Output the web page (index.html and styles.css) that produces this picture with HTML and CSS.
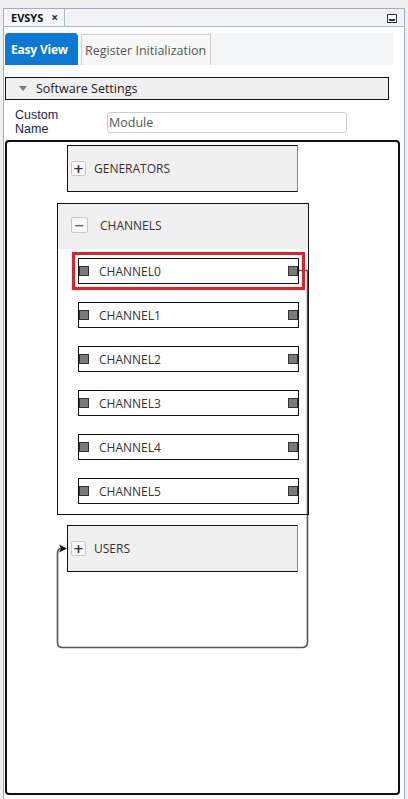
FILE: index.html
```html
<!DOCTYPE html>
<html>
<head>
<meta charset="utf-8">
<link rel="stylesheet" href="styles.css">
</head>
<body>
<div class="panel">
  <div class="titlebar">
    <div class="doc-tab"><span class="doc-name">EVSYS</span><span class="doc-close">×</span></div>
    <div class="min-btn"><span class="min-bar"></span></div>
  </div>
  <div class="tabstrip">
    <div class="tab active">Easy View</div>
    <div class="tab">Register Initialization</div>
  </div>
  <div class="section-head"><span class="tri"></span><span>Software Settings</span></div>
  <div class="field-row">
    <label class="field-label">Custom<br>Name</label>
    <div class="field-input">Module</div>
  </div>
  <div class="canvas">
    <svg class="wires" width="393" height="651" viewBox="0 0 393 651">
      <path d="M291 128.5 H300.5 V500 Q300.5 505.5 295 505.5 H55.5 Q50.5 505.5 50.5 500.5 V411 Q50.5 406.5 55 406.5 H56" fill="none" stroke="#555" stroke-width="1.6"/>
      <polygon points="52,402.5 60,406.5 52,410.5 54,406.5" fill="#111"/>
    </svg>
    <div class="node collapsed gen">
      <span class="pm">+</span><span class="node-title">GENERATORS</span>
    </div>
    <div class="group">
      <div class="group-head"><span class="pm minus">−</span><span class="node-title">CHANNELS</span></div>
      <div class="channels">
        <div class="chan selected"><span class="port"></span><span class="chan-name">CHANNEL0</span><span class="port"></span></div>
        <div class="chan"><span class="port"></span><span class="chan-name">CHANNEL1</span><span class="port"></span></div>
        <div class="chan"><span class="port"></span><span class="chan-name">CHANNEL2</span><span class="port"></span></div>
        <div class="chan"><span class="port"></span><span class="chan-name">CHANNEL3</span><span class="port"></span></div>
        <div class="chan"><span class="port"></span><span class="chan-name">CHANNEL4</span><span class="port"></span></div>
        <div class="chan"><span class="port"></span><span class="chan-name">CHANNEL5</span><span class="port"></span></div>
      </div>
    </div>
    <div class="node collapsed users">
      <span class="pm">+</span><span class="node-title">USERS</span>
    </div>
  </div>
</div>
</body>
</html>
```
FILE: styles.css
```css
* { box-sizing: border-box; }
html, body { margin: 0; padding: 0; }
body {
  background: #f0f0f0;
  width: 408px;
  height: 799px;
  overflow: hidden;
  font-family: "Open Sans", "Noto Sans", sans-serif;
  color: #222;
}
.panel {
  margin: 8px 0 0 3px;
  width: 402px;
  height: 791px;
  background: #fff;
  border: 1px solid #9cb0c5;
  border-bottom: none;
}
.titlebar {
  height: 18px;
  background: #f3f3f3;
  border-bottom: 1px solid #a9b9ca;
  display: flex;
  align-items: stretch;
  justify-content: space-between;
}
.doc-tab {
  width: 61px;
  background: #f6f8fb;
  border-right: 1px solid #a9b9ca;
  display: flex;
  align-items: center;
  padding-left: 7px;
  gap: 8px;
}
.doc-name { font-weight: 700; font-size: 11px; color: #111; }
.doc-close { font-size: 12px; font-weight: 700; color: #333; line-height: 1; }
.min-btn {
  width: 10px;
  height: 9px;
  margin: 5px 7px 0 0;
  border: 1px solid #333;
  background: #fafafa;
  position: relative;
}
.min-bar {
  position: absolute;
  left: 1px; right: 1px; bottom: 1px;
  height: 2px;
  background: #333;
}
.tabstrip {
  margin: 6px 0 0 1px;
  width: 389px;
  height: 32px;
  background: #f5f6f8;
  display: flex;
  align-items: flex-end;
  gap: 3px;
}
.tab {
  height: 31px;
  display: flex;
  align-items: center;
  white-space: nowrap;
  font-size: 12.5px;
  color: #555;
  padding: 0 4px 0 3px;
  background: #f7f7f7;
  border: 1px solid #cfcfcf;
  border-bottom: none;
}
.tab.active {
  height: 32px;
  background: #0a78d4;
  border: none;
  border-radius: 4px 4px 0 0;
  color: #fff;
  font-weight: 700;
  font-size: 12px;
  padding: 0 0 0 6px;
  width: 73px;
  letter-spacing: -0.2px;
}
.section-head {
  margin: 12px 0 0 1px;
  width: 384px;
  height: 23px;
  border: 1px solid #111;
  background: #f0f0f0;
  display: flex;
  align-items: center;
  font-size: 12.5px;
  color: #222;
  padding-left: 13px;
  gap: 9px;
}
.tri {
  width: 0; height: 0;
  border-left: 4px solid transparent;
  border-right: 4px solid transparent;
  border-top: 5px solid #777;
}
.field-row {
  height: 40px;
  display: flex;
  align-items: center;
  padding: 4px 0 0 11px;
}
.field-label {
  width: 92px;
  font-family: "Liberation Sans", Arial, sans-serif;
  font-size: 12.5px;
  line-height: 14.5px;
  color: #1d1d4e;
}
.field-input {
  width: 240px;
  height: 21px;
  border: 1px solid #cdcdcd;
  border-radius: 3px;
  font-size: 12.5px;
  color: #555;
  padding-left: 1px;
  line-height: 19px;
}
.canvas {
  position: relative;
  margin-left: 1px;
  width: 395px;
  height: 655px;
  border: 2px solid #111;
  border-radius: 4px;
  padding: 3px 0 0 50px;
}
.wires { position: absolute; left: 0; top: 0; }
.node {
  margin-left: 10px;
  width: 231px;
  height: 47px;
  background: #f0f0f0;
  border: 1px solid #111;
  border-right-color: #888;
  display: flex;
  align-items: center;
  padding-left: 3px;
  position: relative;
}
.pm {
  width: 15px;
  height: 15px;
  border: 1px solid #c8c8c8;
  border-radius: 2px;
  background: #f8f8f8;
  display: flex;
  align-items: center;
  justify-content: center;
  font-size: 13px;
  font-weight: 700;
  color: #333;
  line-height: 1;
  margin-right: 8px;
  font-family: "DejaVu Sans", sans-serif;
}
.node-title { font-size: 12px; color: #333; }
.group {
  margin-top: 11px;
  width: 252px;
  height: 312px;
  border: 1px solid #111;
  position: relative;
}
.group-head {
  height: 45px;
  background: #f0f0f0;
  display: flex;
  align-items: center;
  padding: 0 0 3px 13px;
}
.pm.minus { width: 17px; height: 16px; margin-right: 12px; font-weight: 400; }
.channels {
  padding: 9px 0 0 20px;
  display: flex;
  flex-direction: column;
  gap: 18px;
}
.chan {
  width: 221px;
  height: 26px;
  border: 1px solid #111;
  background: #fff;
  display: flex;
  align-items: center;
}
.chan.selected {
  outline: 3px solid #e3202b;
  outline-offset: 3px;
}
.port {
  width: 10px;
  height: 10px;
  background: #7a7a7a;
  border: 1px solid #333;
}
.chan-name {
  flex: 1;
  font-size: 12px;
  color: #333;
  padding-left: 10px;
}
.users { margin-top: 10px; }
```
